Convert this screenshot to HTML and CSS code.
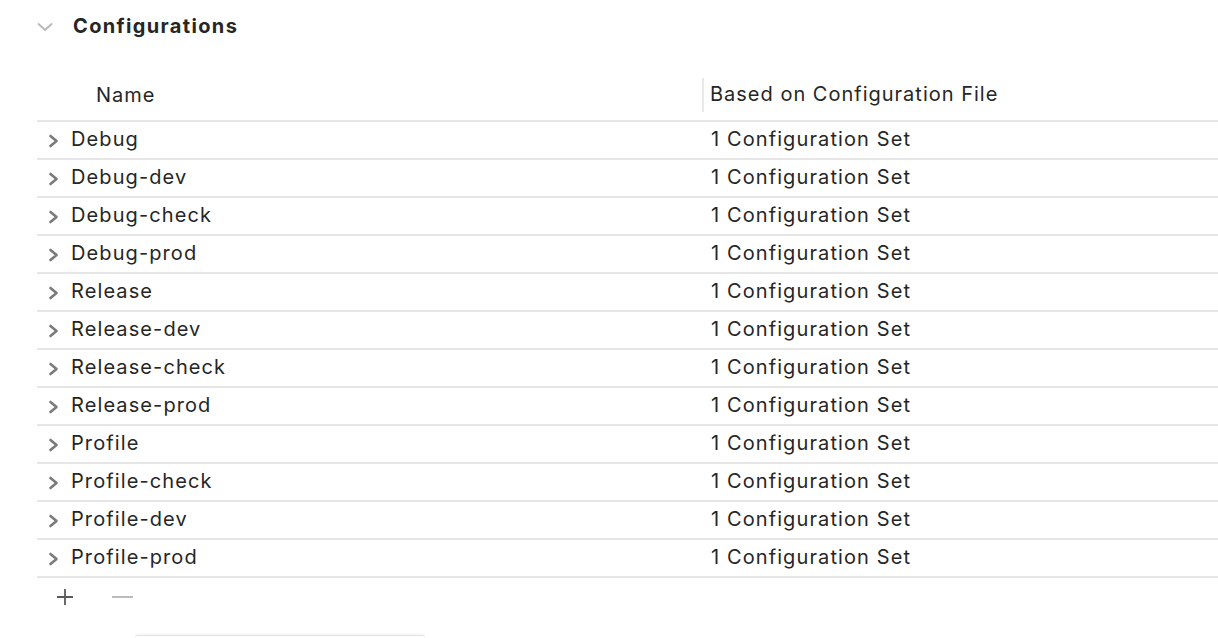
FILE: index.html
```html
<!DOCTYPE html>
<html>
<head>
<meta charset="utf-8">
<link rel="stylesheet" href="styles.css">
</head>
<body>
<div class="page">
  <div class="section-head">
    <svg class="disclosure-down" width="16" height="10" viewBox="0 0 16 10"><path d="M1.5 2 L8 8 L14.5 2" fill="none" stroke="#b8b8b8" stroke-width="1.8" stroke-linecap="round" stroke-linejoin="round"/></svg>
    <span class="section-title">Configurations</span>
  </div>
  <div class="table">
    <div class="thead">
      <div class="th th-name">Name</div>
      <div class="th th-file">Based on Configuration File</div>
    </div>
    <div class="tbody" id="rows">
      <div class="row"><div class="cell-name"><svg class="chev" viewBox="0 0 11 14"><path d="M2.5 2 L8.5 7 L2.5 12" fill="none" stroke="#7a7a7a" stroke-width="2.6" stroke-linecap="round" stroke-linejoin="round"/></svg>Debug</div><div class="cell-file">1 Configuration Set</div></div>
      <div class="row"><div class="cell-name"><svg class="chev" viewBox="0 0 11 14"><path d="M2.5 2 L8.5 7 L2.5 12" fill="none" stroke="#7a7a7a" stroke-width="2.6" stroke-linecap="round" stroke-linejoin="round"/></svg>Debug-dev</div><div class="cell-file">1 Configuration Set</div></div>
      <div class="row"><div class="cell-name"><svg class="chev" viewBox="0 0 11 14"><path d="M2.5 2 L8.5 7 L2.5 12" fill="none" stroke="#7a7a7a" stroke-width="2.6" stroke-linecap="round" stroke-linejoin="round"/></svg>Debug-check</div><div class="cell-file">1 Configuration Set</div></div>
      <div class="row"><div class="cell-name"><svg class="chev" viewBox="0 0 11 14"><path d="M2.5 2 L8.5 7 L2.5 12" fill="none" stroke="#7a7a7a" stroke-width="2.6" stroke-linecap="round" stroke-linejoin="round"/></svg>Debug-prod</div><div class="cell-file">1 Configuration Set</div></div>
      <div class="row"><div class="cell-name"><svg class="chev" viewBox="0 0 11 14"><path d="M2.5 2 L8.5 7 L2.5 12" fill="none" stroke="#7a7a7a" stroke-width="2.6" stroke-linecap="round" stroke-linejoin="round"/></svg>Release</div><div class="cell-file">1 Configuration Set</div></div>
      <div class="row"><div class="cell-name"><svg class="chev" viewBox="0 0 11 14"><path d="M2.5 2 L8.5 7 L2.5 12" fill="none" stroke="#7a7a7a" stroke-width="2.6" stroke-linecap="round" stroke-linejoin="round"/></svg>Release-dev</div><div class="cell-file">1 Configuration Set</div></div>
      <div class="row"><div class="cell-name"><svg class="chev" viewBox="0 0 11 14"><path d="M2.5 2 L8.5 7 L2.5 12" fill="none" stroke="#7a7a7a" stroke-width="2.6" stroke-linecap="round" stroke-linejoin="round"/></svg>Release-check</div><div class="cell-file">1 Configuration Set</div></div>
      <div class="row"><div class="cell-name"><svg class="chev" viewBox="0 0 11 14"><path d="M2.5 2 L8.5 7 L2.5 12" fill="none" stroke="#7a7a7a" stroke-width="2.6" stroke-linecap="round" stroke-linejoin="round"/></svg>Release-prod</div><div class="cell-file">1 Configuration Set</div></div>
      <div class="row"><div class="cell-name"><svg class="chev" viewBox="0 0 11 14"><path d="M2.5 2 L8.5 7 L2.5 12" fill="none" stroke="#7a7a7a" stroke-width="2.6" stroke-linecap="round" stroke-linejoin="round"/></svg>Profile</div><div class="cell-file">1 Configuration Set</div></div>
      <div class="row"><div class="cell-name"><svg class="chev" viewBox="0 0 11 14"><path d="M2.5 2 L8.5 7 L2.5 12" fill="none" stroke="#7a7a7a" stroke-width="2.6" stroke-linecap="round" stroke-linejoin="round"/></svg>Profile-check</div><div class="cell-file">1 Configuration Set</div></div>
      <div class="row"><div class="cell-name"><svg class="chev" viewBox="0 0 11 14"><path d="M2.5 2 L8.5 7 L2.5 12" fill="none" stroke="#7a7a7a" stroke-width="2.6" stroke-linecap="round" stroke-linejoin="round"/></svg>Profile-dev</div><div class="cell-file">1 Configuration Set</div></div>
      <div class="row"><div class="cell-name"><svg class="chev" viewBox="0 0 11 14"><path d="M2.5 2 L8.5 7 L2.5 12" fill="none" stroke="#7a7a7a" stroke-width="2.6" stroke-linecap="round" stroke-linejoin="round"/></svg>Profile-prod</div><div class="cell-file">1 Configuration Set</div></div>
    </div>
    <div class="tfoot">
      <svg class="btn-add" width="18" height="18" viewBox="0 0 18 18"><path d="M9 1 V17 M1 9 H17" stroke="#5a5a5a" stroke-width="1.8"/></svg>
      <svg class="btn-remove" width="21" height="4" viewBox="0 0 21 4"><path d="M0 2 H21" stroke="#b5b5b5" stroke-width="1.8"/></svg>
    </div>
  </div>
  <div class="below">
    <div class="below-box"></div>
  </div>
</div>
</body>
</html>
```

FILE: styles.css
```css
html, body {
  margin: 0;
  padding: 0;
  background: #ffffff;
}
body {
  font-family: Inter, "Liberation Sans", Arial, sans-serif;
  color: #262626;
  width: 1218px;
  height: 638px;
  overflow: hidden;
}
.page {
  padding-left: 37px;
}
.section-head {
  display: flex;
  align-items: center;
  height: 52px;
}
.disclosure-down {
  width: 16px;
  height: 10px;
  margin-right: 20px;
  margin-top: 1px;
}
.section-title {
  font-size: 20px;
  font-weight: 700;
  letter-spacing: 1.35px;
}
.table {
  margin-top: 18px;
}
.thead {
  display: flex;
  height: 50px;
  align-items: center;
  border-bottom: 2px solid #e6e6e6;
}
.th {
  font-size: 20px;
  line-height: 32px;
  letter-spacing: 1px;
}
.th-name {
  width: 665px;
  padding-left: 59px;
  box-sizing: border-box;
}
.th-file {
  border-left: 2px solid #e8e8e8;
  padding-left: 6px;
  padding-bottom: 2px;
}
.row {
  display: flex;
  align-items: center;
  height: 36px;
  box-sizing: border-box;
  height: 38px;
  padding-bottom: 2px;
  border-bottom: 2px solid #e6e6e6;
  font-size: 20px;
  letter-spacing: 1.1px;
}
.cell-name {
  width: 674px;
  display: flex;
  align-items: center;
  padding-left: 11px;
  box-sizing: border-box;
}
.chev {
  width: 11px;
  height: 14px;
  margin-right: 12px;
  margin-top: 4px;
}
.cell-file {
  padding-left: 0;
}
.tfoot {
  display: flex;
  align-items: center;
  height: 38px;
  padding-left: 19px;
}
.btn-add {
  margin-right: 38px;
}
.below {
  padding-left: 98px;
  margin-top: 19px;
}
.below-box {
  width: 290px;
  height: 20px;
  border-top: 1px solid #e2e2e2;
  box-shadow: 0 -1px 2px rgba(0,0,0,0.05);
  border-radius: 3px;
}
```
